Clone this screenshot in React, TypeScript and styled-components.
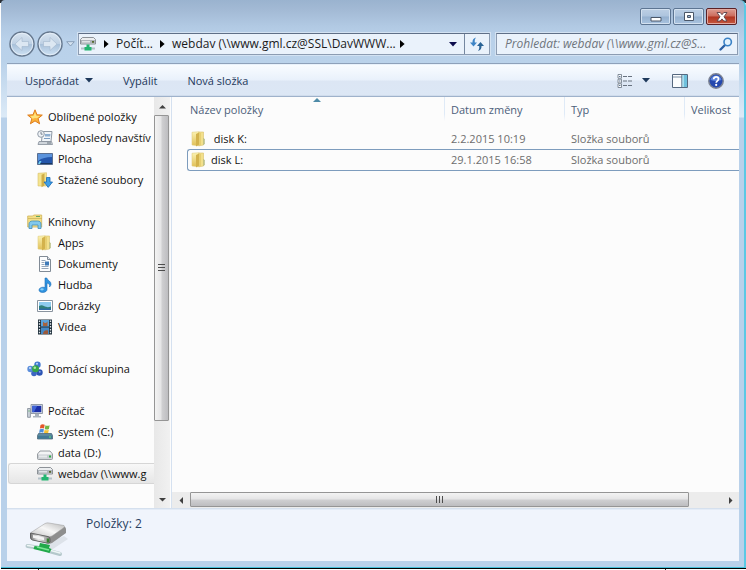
import React from "react";
import styled, { createGlobalStyle, css } from "styled-components";

const Global = createGlobalStyle`
  * { box-sizing: border-box; }
  html, body { margin: 0; padding: 0; height: 100%; }
  body { background: #fff; overflow: hidden; }
  body, button, input, table {
    font-family: "Open Sans", "Noto Sans", "Liberation Sans", sans-serif;
    font-size: 11px;
    line-height: 16px;
  }
  button {
    margin: 0; padding: 0; border: 0; background: none; color: inherit;
    display: inline-flex; align-items: center; cursor: default;
  }
  svg { display: block; flex: none; }
`;

const Desktop = styled.div`
  height: 100vh;
  display: flex;
  flex-direction: column;
  padding-left: 1px;
  background: linear-gradient(#2a2f36 3px, #fdfdfd 3px);
`;

const Frame = styled.main`
  flex: 1;
  min-height: 0;
  display: flex;
  flex-direction: column;
  padding: 0 5px 6px 6px;
  border-right: 2px solid #5cc8e4;
  border-bottom: 1px solid #45bfd8;
  border-radius: 4px 6px 0 0;
  background: linear-gradient(
    #9ab3cf 0, #a3bad5 10px, #b2cae4 27px, #b9d1ea 40px, #bad2ea 62px,
    #dceaf7 117px, #b9d1ea 118px, #b9d1ea 100%
  );
`;

const Baseline = styled.div`
  height: 2px;
  border-top: 1px solid #000;
  background: linear-gradient(90deg, #fff 37px, #222 37px, #222 38px, #fff 38px, #fff 664px, #222 664px, #222 665px, #fff 665px);
`;

const TitleBar = styled.header`
  height: 33px;
  display: flex;
  justify-content: flex-end;
  gap: 2px;
  padding: 8px 2px 0 0;
`;

const CaptionButton = styled.button<{ $danger?: boolean }>`
  width: 31px;
  height: 17px;
  justify-content: center;
  border: 1px solid ${(p) => (p.$danger ? "#5b2126" : "#5d7592")};
  border-radius: 2px;
  box-shadow: inset 0 0 0 1px ${(p) => (p.$danger ? "#e3a9a0" : "#d3e1f0")};
  background: ${(p) =>
    p.$danger
      ? "linear-gradient(#dd9d92 0, #cb6b5b 48%, #b03420 52%, #c5583f 100%)"
      : "linear-gradient(#bccfe4 0, #adc4de 48%, #94b0cf 52%, #aac4e0 100%)"};
`;

const AddressRow = styled.nav`
  display: flex;
  align-items: center;
  height: 22px;
  margin-bottom: 8px;
`;

const History = styled.div`
  display: flex;
  align-items: center;
  flex: none;
  width: 71px;
  padding-left: 1px;
`;

const RoundButton = styled.button`
  flex: none;
  width: 28px;
  height: 26px;
  justify-content: center;
`;

const RecentButton = styled.button`
  flex: none;
  width: 12px;
  height: 26px;
  justify-content: center;
`;

const AddressBox = styled.div`
  display: flex;
  flex: 1;
  min-width: 0;
  height: 22px;
  border: 1px solid #8c9cb2;
  border-top-color: #5f6f87;
  box-shadow: 0 0 0 1px #d3e2f2;
  background: #eaf2fb;
`;

const Crumbs = styled.div`
  display: flex;
  align-items: center;
  flex: 1;
  min-width: 0;
  padding-left: 1px;
  color: #1b1b1b;
`;

const Crumb = styled.button<{ $width: number }>`
  width: ${(p) => p.$width}px;
  flex: none;
  font-size: 12px;
  white-space: nowrap;
`;

const CrumbArrow = styled.button`
  width: 20px;
  height: 20px;
  flex: none;
  justify-content: center;
`;

const DropButton = styled.button`
  width: 22px;
  height: 20px;
  margin-left: auto;
  justify-content: center;
`;

const RefreshButton = styled.button`
  width: 25px;
  height: 20px;
  justify-content: center;
  border-left: 1px solid #7587a0;
`;

const SearchBox = styled.label`
  display: flex;
  align-items: center;
  flex: 0 1 242px;
  min-width: 0;
  height: 22px;
  margin: 0 1px 0 6px;
  padding: 0 4px 0 8px;
  border: 1px solid #8c9cb2;
  border-top-color: #5f6f87;
  box-shadow: 0 0 0 1px #d3e2f2;
  background: #eaf2fb;
`;

const SearchInput = styled.input`
  flex: 1;
  min-width: 0;
  padding: 0;
  border: 0;
  outline: 0;
  background: none;
  color: #222;
  font-size: 12px;
  &::placeholder { color: #6f757c; font-style: italic; opacity: 1; }
`;

const Client = styled.div`
  flex: 1;
  min-height: 0;
  display: flex;
  flex-direction: column;
  border-top: 1px solid #8ea1ba;
  background: #fcfcfc;
`;

const Toolbar = styled.div`
  display: flex;
  align-items: center;
  height: 33px;
  flex: none;
  padding: 0 15px 0 18px;
  border-top: 1px solid #e9f2fb;
  border-bottom: 1px solid #9fb2cb;
  box-shadow: inset 0 -1px #d0dcec;
  background: linear-gradient(#f9fcff 0, #e9f1fb 48%, #dce6f4 52%, #dce7f5 100%);
  color: #1e395b;
`;

const ToolButton = styled.button<{ $gap?: number }>`
  gap: 6px;
  margin-right: ${(p) => p.$gap ?? 0}px;
  white-space: nowrap;
`;

const Spacer = styled.div`
  flex: 1;
`;

const Body = styled.div`
  flex: 1;
  min-height: 0;
  display: flex;
`;

const Sidebar = styled.aside`
  width: 147px;
  flex: none;
  overflow: hidden;
  padding-top: 9px;
`;

const Tree = styled.ul`
  list-style: none;
  margin: 0;
  padding: 0;
`;

const TreeItem = styled.li<{ $space?: boolean }>`
  margin-top: ${(p) => (p.$space ? 21 : 0)}px;
`;

const TreeLink = styled.a<{ $child?: boolean; $selected?: boolean }>`
  display: flex;
  align-items: center;
  gap: 5px;
  height: 21px;
  margin-left: 1px;
  padding-left: ${(p) => (p.$child ? 29 : 19)}px;
  color: #111;
  text-decoration: none;
  white-space: nowrap;
  ${(p) =>
    p.$selected &&
    css`
      border: 1px solid #d6d6d6;
      border-right: 0;
      border-radius: 3px 0 0 3px;
      padding-left: 28px;
      background: linear-gradient(#f8f8f8, #e6e6e6);
    `}
`;

const VScroll = styled.div`
  display: flex;
  flex-direction: column;
  width: 17px;
  flex: none;
  background: linear-gradient(90deg, #e8e8e8, #f1f1f1);
  border-right: 1px solid #fcfcfc;
`;

const HScroll = styled.div`
  display: flex;
  height: 16px;
  flex: none;
  background: #ececec;
`;

const ScrollButton = styled.button`
  flex: none;
  min-width: 16px;
  height: 18px;
  justify-content: center;
`;

const SideButton = styled(ScrollButton)`
  width: 18px;
  height: 16px;
`;

const thumb = css`
  display: flex;
  align-items: center;
  justify-content: center;
  border: 1px solid #959595;
  border-radius: 1px;
`;

const VThumb = styled.div`
  ${thumb}
  flex: 306 1 0;
  width: 15px;
  background: linear-gradient(90deg, #f3f3f3 0, #e5e5e6 46%, #cfcfd1 54%, #bdbdc0 100%);
`;

const HThumb = styled.div`
  ${thumb}
  flex: 498 1 0;
  height: 15px;
  background: linear-gradient(#f3f3f3 0, #e5e5e6 46%, #cfcfd1 54%, #bdbdc0 100%);
`;

const Track = styled.div<{ $grow: number }>`
  flex: ${(p) => p.$grow} 1 0;
`;

const Files = styled.section`
  flex: 1;
  min-width: 0;
  display: flex;
  flex-direction: column;
  border-left: 1px solid #d5e1f0;
`;

const ListArea = styled.div`
  flex: 1;
  min-height: 0;
  overflow: hidden;
  padding-left: 15px;
`;

const Table = styled.table`
  width: 100%;
  table-layout: fixed;
  border-collapse: separate;
  border-spacing: 0;
  text-align: left;
`;

const Col = styled.col<{ $w?: number }>`
  width: ${(p) => (p.$w ? `${p.$w}px` : "auto")};
`;

const Th = styled.th<{ $first?: boolean }>`
  height: 31px;
  padding: 5px 0 10px ${(p) => (p.$first ? 3 : 7)}px;
  font-weight: 400;
  color: #4c607a;
  white-space: nowrap;
  overflow: hidden;
  background: ${(p) =>
    p.$first ? "none" : "linear-gradient(#dfeaf7, #dfeaf7 70%, transparent) left top / 1px 24px no-repeat"};
`;

const HeadCell = styled.div`
  display: grid;
  grid-template-columns: 1fr 8px 1fr;
  align-items: start;
`;

const SortMark = styled.svg`
  margin-top: -4px;
`;

const Td = styled.td`
  height: 21px;
  padding: 0 0 0 7px;
  color: #6d6d6d;
  white-space: nowrap;
`;

const NameTd = styled(Td)`
  padding-left: 4px;
  color: #111;
`;

const Tr = styled.tr<{ $focused?: boolean }>`
  ${(p) =>
    p.$focused &&
    css`
      ${Td} {
        height: 22px;
        border: solid #7d9cbd;
        border-width: 1px 0;
      }
      ${Td}:first-child {
        border-left-width: 1px;
        border-radius: 3px 0 0 3px;
        padding-left: 3px;
      }
    `}
`;

const FileName = styled.a`
  display: flex;
  align-items: center;
  gap: 4px;
  color: inherit;
  text-decoration: none;
  white-space: pre;
`;

const Details = styled.footer`
  display: flex;
  flex: none;
  height: 53px;
  gap: 16px;
  padding: 6px 0 0 17px;
  border-top: 1px solid #d5e0ee;
  box-shadow: inset 0 1px #e4ecf7;
  background: #f0f4fc;
  color: #2a3f61;
`;

const DetailText = styled.p`
  margin: 0;
  font-size: 12px;
  line-height: 18px;
`;

const Down = ({ color = "#1e395b" }: { color?: string }) => (
  <svg width="8" height="5" viewBox="0 0 8 5"><path d="M0 0h8L4 4.6z" fill={color} /></svg>
);
const Right = () => (
  <svg width="5" height="8" viewBox="0 0 5 8"><path d="M0 0l4.6 4L0 8z" fill="#000" /></svg>
);
const ScrollArrow = ({ d }: { d: string }) => (
  <svg width="7" height="7" viewBox="0 0 7 7"><path d={d} fill="#404040" /></svg>
);

const NavCircle = ({ flip }: { flip?: boolean }) => (
  <svg width="26" height="26" viewBox="0 0 26 26">
    <defs>
      <linearGradient id={flip ? "navF" : "navB"} x1="0" y1="0" x2="0" y2="1">
        <stop offset="0" stopColor="#d9e5f1" />
        <stop offset=".48" stopColor="#bfd1e4" />
        <stop offset=".52" stopColor="#a9c1da" />
        <stop offset="1" stopColor="#cfe3f5" />
      </linearGradient>
    </defs>
    <circle cx="13" cy="13" r="12" fill={`url(#${flip ? "navF" : "navB"})`} stroke="#66788e" strokeWidth="1.5" />
    <circle cx="13" cy="13" r="10.8" fill="none" stroke="#e6eff8" strokeWidth=".9" />
    <path
      d={flip ? "M20 13l-7-6.500v4H6.500v5H13v4z" : "M6 13l7-6.500v4h6.500v5H13v4z"}
      fill="#dce7f2" stroke="#a3b7cd" strokeWidth=".6"
    />
  </svg>
);

const FolderIcon = () => (
  <svg width="16" height="16" viewBox="0 0 16 16">
    <defs>
      <linearGradient id="folderFlap" x1="0" y1="0" x2="0" y2="1">
        <stop offset="0" stopColor="#fbf3b4" /><stop offset="1" stopColor="#e0bf55" />
      </linearGradient>
    </defs>
    <path d="M1 1.300L8 .7V14.800L1 14z" fill="url(#folderFlap)" stroke="#e3cf80" strokeWidth=".6" />
    <path d="M8 1h4.500v13L8 14.800z" fill="#f2e08c" stroke="#d9c06a" strokeWidth=".6" />
    <path d="M5 3l3-1.600v12.200L5 15.400z" fill="#d3b24c" />
    <path d="M8 2h2v12l-2 .6z" fill="#e7cf72" />
    <path d="M12.500 7.500l1 .5v5l-1 .5z" fill="#e9d98c" stroke="#9fae7a" strokeWidth=".5" />
  </svg>
);

const StarIcon = () => (
  <svg width="16" height="16" viewBox="0 0 16 16">
    <path d="M8 .8l2 5 5.300.3-4.200 3.400 1.500 5.300L8 11.900l-4.600 2.900 1.500-5.300L.7 6.100 6 5.800z" fill="#fbb23a" stroke="#df7d1c" strokeLinejoin="round" />
    <path d="M8 3l1.300 3.700 3.700.3-3 2.200L8 9 5.500 9.700 3.200 7l3.500-.3z" fill="#ffe27a" />
  </svg>
);

const RecentIcon = () => (
  <svg width="16" height="16" viewBox="0 0 16 16">
    <path d="M5.500 1.500h9.500l-1 10H4.500z" fill="#f1f5f9" stroke="#8f99a4" />
    <path d="M8 4h5.500l-.3 2.500H8z" fill="#8daed0" /><path d="M7 8.500h6" stroke="#7b9cc0" />
    <path d="M2 11.500h12.500l1 3H1z" fill="#cfd5db" stroke="#858e99" strokeWidth=".8" />
    <path d="M10 13h4" stroke="#6b7681" />
    <circle cx="4" cy="4" r="3.300" fill="#eef2f6" stroke="#939da8" />
    <path d="M4 2v2.200h1.600" fill="none" stroke="#5e6b78" strokeWidth=".8" />
  </svg>
);

const DesktopIcon = () => (
  <svg width="16" height="16" viewBox="0 0 16 16">
    <path d="M.5 2.500h15v11H.5z" fill="#2456ab" stroke="#5a6f91" />
    <path d="M1 3h14v3C9 6 5 7 1 10z" fill="#5b93dc" />
    <path d="M1 12h14v1H1z" fill="#19375f" />
    <path d="M1 13l1.500-3h2L3 13z" fill="#72d0ee" />
  </svg>
);

const DownloadsIcon = () => (
  <svg width="16" height="16" viewBox="0 0 16 16">
    <path d="M1 1.300L9.500.7V14L1 14z" fill="#f4e490" stroke="#d9c06a" strokeWidth=".6" />
    <path d="M4.500 2.700l3-1.300v12L4.500 15.200z" fill="#cfae48" />
    <path d="M9.500 5.500h3.500v4.500h2.500L11.200 15.400 7 10h2.500z" fill="#3f9fe6" stroke="#1b6ab4" strokeWidth=".8" />
  </svg>
);

const LibraryIcon = () => (
  <svg width="16" height="16" viewBox="0 0 16 16">
    <path d="M.7 2h5l1-1h8v12H.7z" fill="#f3df86" stroke="#cfb35a" strokeWidth=".8" />
    <path d="M1 4.500h14" stroke="#cdb25b" strokeWidth=".8" /><path d="M9 2.500h4" stroke="#62a663" />
    <path d="M2 14.500V10c0-2 1.500-3 3.500-3h5c2 0 3.500 1 3.500 3v4.500h-3V11H5v3.500z" fill="#83c9ec" stroke="#4491bd" strokeWidth=".8" />
  </svg>
);

const DocumentIcon = () => (
  <svg width="16" height="16" viewBox="0 0 16 16">
    <path d="M2.500.5h8l3 3v12h-11z" fill="#fcfdfe" stroke="#818b96" />
    <path d="M10.500.5v3h3" fill="#dfe4ea" stroke="#818b96" />
    <path d="M4.500 4.500h4M4.500 6.500h3M4.500 8.500h3M4.500 10.500h7M4.500 12.500h7" stroke="#94a6ba" />
    <path d="M8 5.500h4v4H8z" fill="#3e7ab8" />
  </svg>
);

const MusicIcon = () => (
  <svg width="16" height="16" viewBox="0 0 16 16">
    <path d="M8 1h1.800c.4 2.500 4.500 3 4.200 6.300-.2 1.400-.8 2-1.500 2.700.6-2.500-.6-3.500-2.500-4v6.500c0 1.700-2 3-4.300 3S2 14.500 2 13s1.800-2.800 4-2.800c.8 0 1.500.2 2 .4z" fill="#2f93e0" stroke="#1d6db5" strokeWidth=".6" />
    <ellipse cx="5" cy="12.300" rx="1.800" ry="1.100" fill="#8bd0f8" />
  </svg>
);

const PictureIcon = () => (
  <svg width="16" height="16" viewBox="0 0 16 16">
    <path d="M.5 2.500h15v11H.5z" fill="#fff" stroke="#8a949f" />
    <path d="M2 4h12v8H2z" fill="#8ecbee" /><path d="M2 8c3-2 5 0 7 .8S12 9 14 8.500V11H2z" fill="#2e7f78" />
    <path d="M2 10.500h12V12H2z" fill="#2d6aa6" />
  </svg>
);

const VideoIcon = () => (
  <svg width="16" height="16" viewBox="0 0 16 16">
    <path d="M1 .5h14v15H1z" fill="#20303b" />
    <path d="M4 1h8v6.500H4z" fill="#5aa3dc" /><path d="M4 8.500h8V15H4z" fill="#4489c6" />
    <path d="M6 2.500c1.500 2 3 2 4.500 0v4.500H6z" fill="#a7633d" /><path d="M6 15c0-3.500 3-4.500 5-3.500v3.500z" fill="#9a5a3c" />
    <path d="M2.500 1.500v13M13.500 1.500v13" stroke="#e3eaf0" strokeWidth="1.300" strokeDasharray="1.500 1.300" />
  </svg>
);

const HomegroupIcon = () => (
  <svg width="16" height="16" viewBox="0 0 16 16">
    <circle cx="10.500" cy="3.800" r="3.200" fill="#3f78d0" /><circle cx="3.500" cy="8" r="3.200" fill="#5b8edb" />
    <circle cx="12.500" cy="11.500" r="3.200" fill="#2c54b4" /><circle cx="7" cy="12.500" r="2.800" fill="#3c66c2" />
    <circle cx="8.500" cy="7.800" r="3.500" fill="#35a548" /><circle cx="7.800" cy="6.800" r="1.300" fill="#a9e5a5" />
    <circle cx="10" cy="2.800" r="1" fill="#b9d6f8" /><circle cx="3" cy="7" r="1" fill="#d1e3fa" />
    <circle cx="12.800" cy="10.800" r=".9" fill="#8fb2ec" />
  </svg>
);

const ComputerIcon = () => (
  <svg width="16" height="16" viewBox="0 0 16 16">
    <path d="M.6 5.500h2.800v8.800H.6z" fill="#cdd4dc" stroke="#7d8894" strokeWidth=".8" /><path d="M1.500 8h1" stroke="#42a64b" />
    <path d="M4 1.500h11.500v9H4z" fill="#d9dfe6" stroke="#8993a0" strokeWidth=".9" />
    <path d="M5.300 2.800h9v6.400h-9z" fill="#1b2fa8" /><path d="M5.300 2.800h5l-3.500 6.400h-1.500z" fill="#3e63d6" />
    <path d="M8 11h4v2H8zM6 13h8v1.400H6z" fill="#aab3bd" />
  </svg>
);

const SystemDriveIcon = () => (
  <svg width="16" height="16" viewBox="0 0 16 16">
    <path d="M3.500 1Q5.500-.4 7.700.8L7 4.600Q5 3.500 2.900 4.600z" fill="#e4572a" /><path d="M8.400 1.200q2 1 4.200 0l-.7 3.800q-2 1-4.100 0z" fill="#76b644" />
    <path d="M2.700 5.400q2-1.200 4.200-.2l-.6 3.500q-2-1-4.200.2z" fill="#4a8fdb" /><path d="M7.600 5.700q2 1 4.200 0l-.6 3.300q-2 1-4.200 0z" fill="#f5c131" />
    <path d="M1.500 9.500h13l1 2v3.500H.5v-3.500z" fill="#5e8aa0" stroke="#3f5c6d" strokeWidth=".7" />
    <path d="M1 11.800h14v2.700H1z" fill="#417995" /><path d="M12 13h2" stroke="#66ef77" />
  </svg>
);

const DriveIcon = () => (
  <svg width="16" height="16" viewBox="0 0 16 16">
    <path d="M3 6h10l2.500 3v4.500q0 1-1 1h-13q-1 0-1-1V9z" fill="#f3f4f5" stroke="#7f858b" strokeWidth=".8" strokeLinejoin="round" />
    <path d="M1 9.500h14v4.300H1z" fill="#c6cbd0" /><path d="M2 10.500h8v2H2z" fill="#e6e9eb" />
    <path d="M12 11.500h2" stroke="#2eae44" strokeWidth="2" />
  </svg>
);

const NetDriveIcon = () => (
  <svg width="16" height="16" viewBox="0 0 16 16">
    <path d="M2.500 1.500h11l2 2V8H.5V3.500z" fill="#eceef0" stroke="#747a80" strokeWidth=".8" strokeLinejoin="round" />
    <path d="M1 4h14v3.600H1z" fill="#aeb4ba" /><path d="M2 5h8v1.500H2z" fill="#e0e3e6" />
    <path d="M12 5.800h2" stroke="#55692c" strokeWidth="1.800" />
    <path d="M1 12.500h14" stroke="#b3c1c9" strokeWidth="2" /><path d="M6.500 8.500h3v2.500h2v3.500h-7V11h2z" fill="#23b571" />
  </svg>
);

const LargeDriveIcon = () => (
  <svg width="46" height="44" viewBox="0 0 46 44">
    <defs>
      <linearGradient id="driveTop" x1="0" y1="1" x2="1" y2="0">
        <stop offset="0" stopColor="#c4c4c4" /><stop offset=".5" stopColor="#f7f7f7" /><stop offset="1" stopColor="#b9b9b9" />
      </linearGradient>
      <linearGradient id="driveFront" x1="0" y1="0" x2="1" y2="0">
        <stop offset="0" stopColor="#777" /><stop offset=".4" stopColor="#e8e8e8" /><stop offset="1" stopColor="#8b8b8b" />
      </linearGradient>
    </defs>
    <g>
      <path d="M16 31l24-10 4 3-18 12z" fill="#dde2e9" />
      <path d="M6 19L21 9q2-1 4 0l15 2.500q2 .5 2 2.500v4L28 28q-2 1-4 .5L8 25q-2-.5-2-3z" fill="#8e8e8e" />
      <path d="M7 17.500L21 8.500q2-1 4-.5l15 2.500q1 1 0 2L28 21q-2 1-4 .5L7 18.500z" fill="url(#driveTop)" stroke="#9a9a9a" strokeWidth=".5" />
      <path d="M6.500 18l17.500 3.600q2 .5 2 2.500v3q-1 1.400-3 1L8.500 25q-2-.7-2-3z" fill="url(#driveFront)" stroke="#555" strokeWidth=".8" />
      <path d="M9 20l11 2.400v2.800L9 22.800z" fill="#f3f3f3" /><path d="M24 23.500v4" stroke="#36802f" strokeWidth="2.500" />
      <path d="M3.500 31l10 1.500M25 36l11 3" stroke="#b5c8cc" strokeWidth="4" strokeLinecap="round" />
      <path d="M3.500 30.500l10 1.500M25 35l11 3" stroke="#edf5f5" strokeWidth="1.500" strokeLinecap="round" />
      <path d="M16 28l10 2-1 3 2.500 1-2 4-16-4 1-3 4.500.5z" fill="#22a94a" /><path d="M13 32l12 3" stroke="#7be795" strokeWidth="1.500" />
    </g>
  </svg>
);

const RefreshIcon = () => (
  <svg width="16" height="16" viewBox="0 0 16 16" fill="#3f85c6">
    <path d="M7 1.500C4.500 2 3.300 4 3.500 6.500H1L4.500 10.500 8 6.500H5.800C5.600 4.500 5.800 3 7 1.500z" />
    <path d="M9 15c2.500-.5 3.700-2.500 3.500-5H15L11.500 6 8 10h2.200c.2 2 0 3.500-1.200 5z" fill="#2a6395" />
  </svg>
);

const SearchIcon = () => (
  <svg width="14" height="14" viewBox="0 0 14 14">
    <path d="M6 8L1.500 12.500" stroke="#2b5fa3" strokeWidth="2.400" strokeLinecap="round" />
    <circle cx="8.700" cy="5" r="3.700" fill="#e3f2fd" stroke="#3a82c6" strokeWidth="1.600" />
  </svg>
);

const ViewIcon = () => (
  <svg width="16" height="14" viewBox="0 0 16 14">
    <path d="M1 .5h3.500v3.700H1zM1 5.200h3.500v3.700H1zM1 9.800h3.500v3.700H1z" fill="#fff" stroke="#77828f" strokeWidth=".9" />
    <path d="M2.200 2.500h1.200M2.200 7h1.200M2.200 11.500h1.200" stroke="#3a5a83" />
    <path d="M6 2.500H10M11 2.500H15M6 7H10M11 7H15M6 11.500H10M11 11.500H15" stroke="#68727f" />
  </svg>
);

const PreviewIcon = () => (
  <svg width="16" height="14" viewBox="0 0 16 14">
    <path d="M.5.5h15v13H.5z" fill="#fbfdfe" stroke="#55687f" />
    <path d="M1 3h9" stroke="#7d8fa4" /><path d="M10 1h5v12h-5z" fill="#6fc0dc" /><path d="M10 1h2v12h-2z" fill="#a9dded" />
    <path d="M9.700.5v13" stroke="#55687f" strokeWidth=".8" />
  </svg>
);

const HelpIcon = () => (
  <svg width="16" height="16" viewBox="0 0 16 16">
    <circle cx="8" cy="8" r="7.200" fill="#2448ae" stroke="#7c8393" strokeWidth="1.500" />
    <path d="M2.500 7a5.600 5.600 0 0 1 11 0q-5 2-11 0z" fill="#5f86dc" />
    <path d="M5.700 6.200c0-3.200 4.800-3 4.800-.2 0 1.800-2.300 1.800-2.300 3.800" fill="none" stroke="#fff" strokeWidth="1.700" />
    <circle cx="8.200" cy="11.900" r="1.100" fill="#fff" />
  </svg>
);

type TreeNode = { label: string; icon: React.ReactNode; child?: boolean; space?: boolean; selected?: boolean };

const tree: TreeNode[] = [
  { label: "Oblíbené položky", icon: <StarIcon /> },
  { label: "Naposledy navštív", icon: <RecentIcon />, child: true },
  { label: "Plocha", icon: <DesktopIcon />, child: true },
  { label: "Stažené soubory", icon: <DownloadsIcon />, child: true },
  { label: "Knihovny", icon: <LibraryIcon />, space: true },
  { label: "Apps", icon: <FolderIcon />, child: true },
  { label: "Dokumenty", icon: <DocumentIcon />, child: true },
  { label: "Hudba", icon: <MusicIcon />, child: true },
  { label: "Obrázky", icon: <PictureIcon />, child: true },
  { label: "Videa", icon: <VideoIcon />, child: true },
  { label: "Domácí skupina", icon: <HomegroupIcon />, space: true },
  { label: "Počítač", icon: <ComputerIcon />, space: true },
  { label: "system (C:)", icon: <SystemDriveIcon />, child: true },
  { label: "data (D:)", icon: <DriveIcon />, child: true },
  { label: "webdav (\\\\www.g", icon: <NetDriveIcon />, child: true, selected: true },
];

const files = [
  { name: " disk K:", date: "2.2.2015 10:19", type: "Složka souborů" },
  { name: "disk L:", date: "29.1.2015 16:58", type: "Složka souborů", focused: true },
];

export default function App() {
  return (
    <>
      <Global />
      <Desktop>
        <Frame>
          <TitleBar>
            <CaptionButton aria-label="Minimalizovat">
              <svg width="12" height="12" viewBox="0 0 12 12"><path d="M1 6.500h10v3.500H1z" fill="#fff" stroke="#4b5768" /></svg>
            </CaptionButton>
            <CaptionButton aria-label="Maximalizovat">
              <svg width="12" height="12" viewBox="0 0 12 12">
                <path d="M1.500 1.500h9v8h-9z" fill="#fff" stroke="#4b5768" /><path d="M4.500 4.500h3v2h-3z" fill="#9db6d3" stroke="#4b5768" />
              </svg>
            </CaptionButton>
            <CaptionButton $danger aria-label="Zavřít">
              <svg width="12" height="12" viewBox="0 0 12 12">
                <path d="M1 1.500h3.200L6 3.700l1.800-2.200H11L8 5.800l3 4.200H7.800L6 7.900 4.200 10H1l3-4.200z" fill="#fff" stroke="#5a4148" strokeWidth=".9" />
              </svg>
            </CaptionButton>
          </TitleBar>

          <AddressRow aria-label="Adresa">
            <History>
              <RoundButton aria-label="Zpět"><NavCircle /></RoundButton>
              <RoundButton aria-label="Vpřed"><NavCircle flip /></RoundButton>
              <RecentButton aria-label="Poslední stránky">
                <svg width="9" height="6" viewBox="0 0 9 6"><path d="M.7.7h7.600L4.500 5z" fill="#d5e3f1" stroke="#8298b2" strokeWidth=".9" /></svg>
              </RecentButton>
            </History>
            <AddressBox>
              <Crumbs>
                <NetDriveIcon />
                <CrumbArrow aria-label="Rozbalit"><Right /></CrumbArrow>
                <Crumb $width={36}>Počít...</Crumb>
                <CrumbArrow aria-label="Rozbalit"><Right /></CrumbArrow>
                <Crumb $width={220}>{"webdav (\\\\www.gml.cz@SSL\\DavWWW..."}</Crumb>
                <CrumbArrow aria-label="Rozbalit"><Right /></CrumbArrow>
                <DropButton aria-label="Předchozí umístění"><Down color="#0c0c4c" /></DropButton>
              </Crumbs>
              <RefreshButton aria-label="Aktualizovat"><RefreshIcon /></RefreshButton>
            </AddressBox>
            <SearchBox>
              <SearchInput type="text" aria-label="Prohledat" placeholder={"Prohledat: webdav (\\\\www.gml.cz@S..."} />
              <SearchIcon />
            </SearchBox>
          </AddressRow>

          <Client>
            <Toolbar>
              <ToolButton $gap={30}>Uspořádat <Down /></ToolButton>
              <ToolButton $gap={30}>Vypálit</ToolButton>
              <ToolButton>Nová složka</ToolButton>
              <Spacer />
              <ToolButton $gap={9} aria-label="Zobrazení"><ViewIcon /></ToolButton>
              <ToolButton $gap={22} aria-label="Další možnosti"><Down /></ToolButton>
              <ToolButton $gap={20} aria-label="Podokno náhledu"><PreviewIcon /></ToolButton>
              <ToolButton aria-label="Nápověda"><HelpIcon /></ToolButton>
            </Toolbar>

            <Body>
              <Sidebar>
                <Tree>
                  {tree.map((n) => (
                    <TreeItem key={n.label} $space={n.space}>
                      <TreeLink href="#" $child={n.child} $selected={n.selected}>{n.icon}{n.label}</TreeLink>
                    </TreeItem>
                  ))}
                </Tree>
              </Sidebar>
              <VScroll>
                <ScrollButton aria-label="Nahoru"><ScrollArrow d="M0 5.500h7L3.500 2z" /></ScrollButton>
                <VThumb>
                  <svg width="7" height="8" viewBox="0 0 7 8"><path d="M0 .5h7M0 3.500h7M0 6.500h7" stroke="#4d4d4d" /></svg>
                </VThumb>
                <Track $grow={70} />
                <ScrollButton aria-label="Dolů"><ScrollArrow d="M0 2h7L3.500 5.500z" /></ScrollButton>
              </VScroll>
              <Files>
                <ListArea>
                  <Table>
                    <colgroup><Col $w={257} /><Col $w={120} /><Col $w={120} /><Col /></colgroup>
                    <thead>
                      <tr>
                        <Th $first>
                          <HeadCell>
                            Název položky
                            <SortMark width="8" height="4" viewBox="0 0 8 4"><path d="M0 4h8L4 0z" fill="#4e8ba8" /></SortMark>
                          </HeadCell>
                        </Th>
                        <Th>Datum změny</Th>
                        <Th>Typ</Th>
                        <Th>Velikost</Th>
                      </tr>
                    </thead>
                    <tbody>
                      {files.map((f) => (
                        <Tr key={f.name} $focused={f.focused}>
                          <NameTd><FileName href="#"><FolderIcon />{f.name}</FileName></NameTd>
                          <Td>{f.date}</Td>
                          <Td>{f.type}</Td>
                          <Td />
                        </Tr>
                      ))}
                    </tbody>
                  </Table>
                </ListArea>
                <HScroll>
                  <SideButton aria-label="Vlevo"><ScrollArrow d="M5 0v7L1.500 3.500z" /></SideButton>
                  <HThumb>
                    <svg width="8" height="7" viewBox="0 0 8 7"><path d="M.5 0v7M3.500 0v7M6.500 0v7" stroke="#4d4d4d" /></svg>
                  </HThumb>
                  <Track $grow={32} />
                  <SideButton aria-label="Vpravo"><ScrollArrow d="M2 0v7l3.500-3.500z" /></SideButton>
                </HScroll>
              </Files>
            </Body>

            <Details>
              <LargeDriveIcon />
              <DetailText>Položky: 2</DetailText>
            </Details>
          </Client>
        </Frame>
        <Baseline />
      </Desktop>
    </>
  );
}
